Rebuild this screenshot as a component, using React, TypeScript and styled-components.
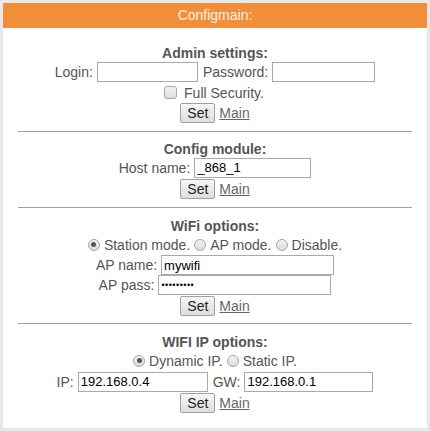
import React from "react";
import styled, { createGlobalStyle } from "styled-components";

const Global = createGlobalStyle`
  html, body { margin: 0; padding: 0; }
  body {
    background: #e8e8e8;
    font-family: Arial, "Liberation Sans", sans-serif;
    font-size: 14px;
    color: #555;
    padding: 3px;
  }
`;

const Card = styled.div`
  width: 424px;
  background: #fff;
`;

const Header = styled.div`
  height: 25px;
  line-height: 25px;
  background: #f28d3a;
  color: #fdf3e4;
  text-align: center;
  font-size: 14px;
`;

const Section = styled.div<{ $pt: number; $pb: number }>`
  padding-top: ${(p) => p.$pt}px;
  padding-bottom: ${(p) => p.$pb}px;
  display: flex;
  flex-direction: column;
`;

const Title = styled.div`
  height: 16px;
  line-height: 16px;
  font-weight: bold;
  text-align: center;
  color: #555;
`;

const Row = styled.div<{ $h: number }>`
  height: ${(p) => p.$h}px;
  display: flex;
  align-items: center;
  justify-content: center;
  white-space: pre;
`;

const Label = styled.span`
  color: #555;
  margin-right: 4px;
`;

const Gap = styled.span`
  width: 5px;
`;

const Field = styled.input<{ $w: number }>`
  box-sizing: border-box;
  width: ${(p) => p.$w}px;
  height: 20px;
  border: 1px solid #a9a9a9;
  padding: 0 2px;
  font-family: Arial, "Liberation Sans", sans-serif;
  font-size: 13px;
  color: #000;
  background: #fff;
  outline: none;
  margin: 0;
`;

const PassField = styled(Field)`
  font-size: 9px;
  letter-spacing: 0.5px;
`;

const Check = styled.span`
  box-sizing: border-box;
  width: 13px;
  height: 13px;
  border: 1px solid #a6a6a6;
  border-radius: 3px;
  background: linear-gradient(#f4f4f4, #dcdcdc);
  margin-right: 7px;
`;

const Radio = styled.span<{ $on?: boolean }>`
  box-sizing: border-box;
  width: 12px;
  height: 12px;
  border: 1px solid #a6a6a6;
  border-radius: 50%;
  background: linear-gradient(#f4f4f4, #dcdcdc);
  margin: 0 4px 0 2px;
  display: flex;
  align-items: center;
  justify-content: center;
  &::after {
    content: "";
    width: 5px;
    height: 5px;
    border-radius: 50%;
    background: ${(p) => (p.$on ? "#555" : "transparent")};
  }
`;

const Opt = styled.span`
  color: #555;
  margin-right: 2px;
`;

const Button = styled.button`
  box-sizing: border-box;
  height: 20px;
  padding: 0 6px;
  border: 1px solid #a0a0a0;
  border-radius: 2px;
  background: linear-gradient(#f7f7f7, #dddddd);
  font-family: Arial, "Liberation Sans", sans-serif;
  font-size: 14px;
  color: #222;
  margin-right: 4px;
`;

const Link = styled.a`
  color: #666;
  text-decoration: underline;
`;

const Rule = styled.div`
  height: 1px;
  margin: 0 15px;
  background: #a0a0a0;
`;

const SetRow = ({ h }: { h: number }) => (
  <Row $h={h}>
    <Button>Set</Button>
    <Link href="#">Main</Link>
  </Row>
);

export default function App() {
  return (
    <>
      <Global />
      <Card>
        <Header>Configmain:</Header>
        <Section $pt={17} $pb={8}>
          <Title>Admin settings:</Title>
          <Row $h={21}>
            <Label>Login:</Label>
            <Field $w={101} readOnly />
            <Gap />
            <Label>Password:</Label>
            <Field $w={103} readOnly />
          </Row>
          <Row $h={21}>
            <Check />
            <Opt>Full Security.</Opt>
          </Row>
          <SetRow h={20} />
        </Section>
        <Rule />
        <Section $pt={9} $pb={8}>
          <Title>Config module:</Title>
          <Row $h={21}>
            <Label>Host name:</Label>
            <Field $w={117} readOnly defaultValue="_868_1" />
          </Row>
          <SetRow h={21} />
        </Section>
        <Rule />
        <Section $pt={10} $pb={7}>
          <Title>WiFi options:</Title>
          <Row $h={21}>
            <Radio $on />
            <Opt>Station mode.</Opt>
            <Radio />
            <Opt>AP mode.</Opt>
            <Radio />
            <Opt>Disable.</Opt>
          </Row>
          <Row $h={20}>
            <Label>AP name:</Label>
            <Field $w={173} readOnly defaultValue="mywifi" />
          </Row>
          <Row $h={20}>
            <Label>AP pass:</Label>
            <PassField $w={173} type="password" readOnly defaultValue="123456789" />
          </Row>
          <SetRow h={21} />
        </Section>
        <Rule />
        <Section $pt={10} $pb={15}>
          <Title>WIFI IP options:</Title>
          <Row $h={21}>
            <Radio $on />
            <Opt>Dynamic IP.</Opt>
            <Radio />
            <Opt>Static IP.</Opt>
          </Row>
          <Row $h={21}>
            <Label>IP:</Label>
            <Field $w={130} readOnly defaultValue="192.168.0.4" />
            <Gap />
            <Label>GW:</Label>
            <Field $w={129} readOnly defaultValue="192.168.0.1" />
          </Row>
          <SetRow h={21} />
        </Section>
      </Card>
    </>
  );
}
